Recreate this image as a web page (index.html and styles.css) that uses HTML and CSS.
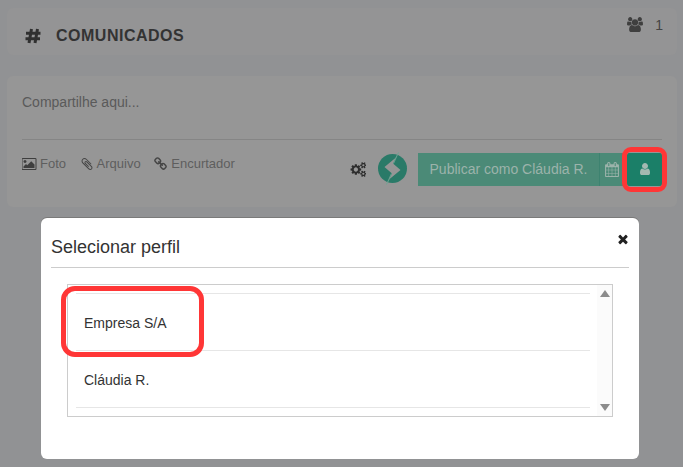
FILE: index.html
```html
<!DOCTYPE html>
<html lang="pt">
<head>
<meta charset="utf-8">
<title>Comunicados</title>
<link rel="stylesheet" href="styles.css">
</head>
<body>
<main class="page">
  <header class="card head">
    <div class="title">
      <svg class="ic-hash" viewBox="0 0 16 16"><path d="M6.500 1 4 15M12.500 1 10 15M1 5.300H15.500M.5 10.700H15" /></svg>
      <h1>COMUNICADOS</h1>
    </div>
    <div class="members">
      <svg class="ic-users" viewBox="0 0 1920 1792"><path d="M593 896q-162 5-265 128h-134q-82 0-138-40.500t-56-118.500q0-353 124-353 6 0 43.500 21t97.500 42.500 119 21.500q67 0 133-23-5 37-5 66 0 139 81 256zm1071 637q0 120-73 189.500t-194 69.500h-874q-121 0-194-69.500t-73-189.500q0-53 3.500-103.500t14-109 26.500-108.500 43-97.500 62-81 85.500-53.500 111.500-20q10 0 43 21.500t73 48 107 48 135 21.500 135-21.500 107-48 73-48 43-21.500q61 0 111.500 20t85.500 53.500 62 81 43 97.500 26.500 108.500 14 109 3.500 103.500zm-1024-1277q0 106-75 181t-181 75-181-75-75-181 75-181 181-75 181 75 75 181zm704 384q0 159-112.500 271.500t-271.500 112.500-271.500-112.500-112.500-271.500 112.500-271.500 271.500-112.500 271.500 112.500 112.500 271.500zm576 225q0 78-56 118.500t-138 40.500h-134q-103-123-265-128 81-117 81-256 0-29-5-66 66 23 133 23 59 0 119-21.500t97.500-42.500 43.500-21q124 0 124 353zm-128-609q0 106-75 181t-181 75-181-75-75-181 75-181 181-75 181 75 75 181z"/></svg>
      <span>1</span>
    </div>
  </header>

  <section class="card composer">
    <p class="placeholder">Compartilhe aqui...</p>
    <div class="bar">
      <div class="tools">
        <span class="tool"><svg class="ic-tool" viewBox="0 0 1920 1792"><path d="M576 576q0 80-56 136t-136 56-136-56-56-136 56-136 136-56 136 56 56 136zm1024 384v448h-1408v-192l320-320 160 160 512-512zm96-704h-1600q-13 0-22.500 9.500t-9.500 22.500v1216q0 13 9.500 22.500t22.500 9.500h1600q13 0 22.500-9.500t9.500-22.500v-1216q0-13-9.500-22.500t-22.500-9.500zm160 32v1216q0 66-47 113t-113 47h-1600q-66 0-113-47t-47-113v-1216q0-66 47-113t113-47h1600q66 0 113 47t47 113z"/></svg>Foto</span>
        <span class="tool"><svg class="ic-tool ic-narrow" viewBox="0 0 1792 1792"><path d="M1596 1385q0 117-79 196t-196 79q-135 0-235-100l-777-776q-113-115-113-271 0-159 110-270t269-111q158 0 273 113l605 606q10 10 10 22 0 16-30.500 46.500t-46.500 30.500q-13 0-23-10l-606-607q-79-77-181-77-106 0-179 75t-73 181q0 105 76 181l776 777q63 63 145 63 64 0 106-42t42-106q0-82-63-145l-581-581q-26-24-60-24-29 0-48 19t-19 48q0 32 25 59l410 410q10 10 10 22 0 16-31 47t-47 31q-12 0-22-10l-410-410q-63-61-63-149 0-82 57-139t139-57q88 0 149 63l581 581q100 98 100 235z"/></svg>Arquivo</span>
        <span class="tool"><svg class="ic-tool ic-narrow" viewBox="0 0 1792 1792"><path d="M1456 1216q0-40-28-68l-208-208q-28-28-68-28-42 0-72 32 3 3 19 18.500t21.500 21.500 15 19 13 25.500 3.500 27.500q0 40-28 68t-68 28q-15 0-27.500-3.500t-25.500-13-19-15-21.500-21.500-18.500-19q-33 31-33 73 0 40 28 68l206 207q27 27 68 27 40 0 68-26l147-146q28-28 28-67zm-703-705q0-40-28-68l-206-207q-28-28-68-28-39 0-68 27l-147 146q-28 28-28 67 0 40 28 68l208 208q27 27 68 27 42 0 72-31-3-3-19-18.500t-21.500-21.500-15-19-13-25.500-3.500-27.500q0-40 28-68t68-28q15 0 27.500 3.500t25.500 13 19 15 21.500 21.500 18.500 19q33-31 33-73zm895 705q0 120-85 203l-147 146q-83 83-203 83-121 0-204-85l-206-207q-83-83-83-203 0-123 88-209l-88-88q-86 88-208 88-120 0-204-84l-208-208q-84-84-84-204t85-203l147-146q83-83 203-83 121 0 204 85l206 207q83 83 83 203 0 123-88 209l88 88q86-88 208-88 120 0 204 84l208 208q84 84 84 204z"/></svg>Encurtador</span>
      </div>
      <div class="actions">
        <svg class="ic-cogs" viewBox="0 0 1920 1792"><path d="M960 896q0-106-75-181t-181-75-181 75-75 181 75 181 181 75 181-75 75-181zm768 512q0-52-38-90t-90-38-90 38-38 90q0 53 37.500 90.500t90.500 37.500 90.500-37.500 37.500-90.500zm0-1024q0-52-38-90t-90-38-90 38-38 90q0 53 37.500 90.500t90.500 37.500 90.500-37.500 37.500-90.500zm-384 421v185q0 10-7 19.500t-16 10.500l-155 24q-11 35-32 76 34 48 90 115 7 11 7 20 0 12-7 19-23 30-82.500 89.500t-78.500 59.500q-11 0-21-7l-115-90q-37 19-77 31-11 108-23 155-7 24-30 24h-186q-11 0-20-7.500t-10-17.500l-23-153q-34-10-75-31l-118 89q-7 7-20 7-11 0-21-8-144-133-144-160 0-9 7-19 10-14 41-53t47-61q-23-44-35-82l-152-24q-10-1-17-9.500t-7-19.500v-185q0-10 7-19.500t16-10.500l155-24q11-35 32-76-34-48-90-115-7-11-7-20 0-12 7-20 22-30 82-89t79-59q11 0 21 7l115 90q34-18 77-32 11-108 23-154 7-24 30-24h186q11 0 20 7.500t10 17.500l23 153q34 10 75 31l118-89q8-7 20-7 11 0 21 8 144 133 144 160 0 8-7 19-12 16-42 54t-45 60q23 48 34 82l152 23q10 2 17 10.500t7 19.500zm640 533v140q0 16-149 31-12 27-30 52 51 113 51 138 0 4-4 7-122 71-124 71-8 0-46-47t-52-68q-20 2-30 2t-30-2q-14 21-52 68t-46 47q-2 0-124-71-4-3-4-7 0-25 51-138-18-25-30-52-149-15-149-31v-140q0-16 149-31 13-29 30-52-51-113-51-138 0-4 4-7 4-2 35-20t59-34 30-16q8 0 46 46.500t52 67.500q20-2 30-2t30 2q51-71 92-112l6-2q4 0 124 70 4 3 4 7 0 25-51 138 17 23 30 52 149 15 149 31zm0-1024v140q0 16-149 31-12 27-30 52 51 113 51 138 0 4-4 7-122 71-124 71-8 0-46-47t-52-68q-20 2-30 2t-30-2q-14 21-52 68t-46 47q-2 0-124-71-4-3-4-7 0-25 51-138-18-25-30-52-149-15-149-31v-140q0-16 149-31 13-29 30-52-51-113-51-138 0-4 4-7 4-2 35-20t59-34 30-16q8 0 46 46.500t52 67.500q20-2 30-2t30 2q51-71 92-112l6-2q4 0 124 70 4 3 4 7 0 25-51 138 17 23 30 52 149 15 149 31z"/></svg>
        <svg class="logo" viewBox="0 0 30 34"><circle cx="14.500" cy="16.500" r="14.500" fill="#2a7a68"/><path d="M18 5.500 6.500 15 14 21.500 11 27.500 22.500 18 15 11.500Z" fill="#969696"/><path d="M20.500 .5 15.500 11.500 18 5.500ZM8.500 32.500 13.500 21.500 11 27.500Z" fill="#6fa494" stroke="#6fa494" stroke-width=".6"/></svg>
        <div class="btn-group">
          <button class="btn btn-main" type="button">Publicar como Cláudia R.</button>
          <button class="btn btn-cal" type="button"><svg class="ic-cal" viewBox="0 0 1664 1792"><path d="M128 1664h288v-288h-288v288zm352 0h320v-288h-320v288zm-352-352h288v-320h-288v320zm352 0h320v-320h-320v320zm-352-384h288v-288h-288v288zm736 736h320v-288h-320v288zm-384-736h320v-288h-320v288zm768 736h288v-288h-288v288zm-384-352h320v-320h-320v320zm-352-864v-288q0-13-9.500-22.500t-22.500-9.500h-64q-13 0-22.500 9.500t-9.500 22.500v288q0 13 9.500 22.500t22.500 9.500h64q13 0 22.500-9.500t9.500-22.500zm736 864h288v-320h-288v320zm-384-384h320v-288h-320v288zm384 0h288v-288h-288v288zm32-480v-288q0-13-9.500-22.500t-22.500-9.500h-64q-13 0-22.500 9.500t-9.500 22.500v288q0 13 9.500 22.500t22.500 9.500h64q13 0 22.500-9.500t9.500-22.500zm384-64v1280q0 52-38 90t-90 38h-1408q-52 0-90-38t-38-90v-1280q0-52 38-90t90-38h128v-96q0-66 47-113t113-47h64q66 0 113 47t47 113v96h384v-96q0-66 47-113t113-47h64q66 0 113 47t47 113v96h128q52 0 90 38t38 90z"/></svg></button>
          <button class="btn btn-user" type="button"><svg class="ic-user" viewBox="0 0 1792 1792"><path d="M1536 1399q0 109-62.500 187t-150.500 78h-854q-88 0-150.500-78t-62.500-187q0-85 8.500-160.500t31.500-152 58.500-131 94-89 134.500-34.500q131 128 313 128t313-128q76 0 134.500 34.500t94 89 58.500 131 31.500 152 8.500 160.500zm-256-887q0 159-112.500 271.500t-271.500 112.500-271.500-112.500-112.500-271.500 112.500-271.500 271.500-112.500 271.500 112.500 112.500 271.500z"/></svg></button>
        </div>
      </div>
    </div>
  </section>
</main>

<div class="mark mark-user"></div>

<div class="modal">
  <div class="modal-head">
    <h2>Selecionar perfil</h2>
    <svg class="ic-close" viewBox="0 0 1792 1792"><path d="M1490 1322q0 40-28 68l-136 136q-28 28-68 28t-68-28l-294-294-294 294q-28 28-68 28t-68-28l-136-136q-28-28-28-68t28-68l294-294-294-294q-28-28-28-68t28-68l136-136q28-28 68-28t68 28l294 294 294-294q28-28 68-28t68 28l136 136q28 28 28 68t-28 68l-294 294 294 294q28 28 28 68z"/></svg>
  </div>
  <div class="list">
    <ul class="rows">
      <li class="row">Empresa S/A</li>
      <li class="row">Cláudia R.</li>
    </ul>
    <div class="scrollbar">
      <span class="arrow arrow-up"></span>
      <span class="arrow arrow-down"></span>
    </div>
  </div>
</div>

<div class="mark mark-company"></div>
</body>
</html>
```

FILE: styles.css
```css
* { box-sizing: border-box; }
html, body { margin: 0; height: 100%; }
body {
  background: #919294;
  font-family: "Liberation Sans", Arial, sans-serif;
  color: #333;
  overflow: hidden;
  position: relative;
}
.page {
  padding: 8px 6px 0 7px;
  display: flex;
  flex-direction: column;
  gap: 21px;
}
.card { background: #969696; border-radius: 6px; }
.head {
  height: 47px;
  display: flex;
  justify-content: space-between;
  background: #949495;
}
.title { display: flex; align-items: center; gap: 15px; padding: 8px 0 0 18px; height: 47px; }
.ic-hash { width: 16px; height: 16px; fill: none; stroke: #303030; stroke-width: 3; display: block; }
h1 { margin: 0; font-size: 16px; font-weight: 700; color: #333; letter-spacing: 0.5px; }
.members { display: flex; align-items: flex-start; gap: 12px; padding: 9px 14px 0 0; font-size: 14px; color: #444; line-height: 16px; }
.ic-users { width: 16px; height: 15px; fill: #3f3f3f; display: block; }
.composer { height: 131px; padding: 0 15px; }
.placeholder { margin: 0; padding: 18px 0 0; height: 64px; font-size: 14px; line-height: 16px; color: #5a5a5a; border-bottom: 1px solid #858585; }
.bar { display: flex; justify-content: space-between; padding-top: 12px; }
.tools { display: flex; gap: 13.6px; font-size: 13px; color: #5e5e5e; padding-top: 4px; }
.tool { display: flex; align-items: flex-start; gap: 3px; line-height: 16px; }
.ic-tool { width: 15px; height: 14px; fill: #3e3e3e; display: block; margin-top: 1px; }
.ic-narrow { width: 14px; height: 14px; fill: #454545; }
.actions { display: flex; align-items: center; }
.ic-cogs { width: 16px; height: 15px; fill: #2e2e2e; margin-right: 12px; display: block; }
.logo { width: 30px; height: 34px; margin-right: 10px; display: block; overflow: visible; }
.btn-group { display: flex; height: 33px; }
.btn { border: 0; margin: 0; padding: 0; font: inherit; display: flex; align-items: center; justify-content: center; }
.btn-main { width: 181px; background: #4b8a77; color: #9cb3ab; font-size: 14px; }
.btn-cal { width: 28px; background: #4b8a77; border-left: 1px solid #3d8370; }
.ic-cal { width: 14px; height: 15px; fill: #9cb3ab; display: block; margin-left: -3px; }
.btn-user { width: 35px; background: #1b7f68; border-radius: 2px; }
.ic-user { width: 14px; height: 14px; fill: #a3b9b1; display: block; }
.mark {
  position: absolute;
  border: 5px solid #ff3636;
}
.mark-user { left: 622px; top: 147px; width: 45px; height: 45px; border-radius: 9px; }
.mark-company { left: 61px; top: 286px; width: 143px; height: 71px; border-radius: 14px; }
.modal {
  position: absolute;
  left: 41px;
  top: 218px;
  width: 598px;
  height: 241px;
  background: #fff;
  border-radius: 6px;
  padding: 0 10px;
  box-shadow: 0 -1px 0 #7a7a7a;
}
.modal-head {
  height: 50px;
  border-bottom: 1px solid #ccc;
  display: flex;
  justify-content: space-between;
  padding-top: 19px;
}
h2 { margin: 0; font-size: 18px; font-weight: 400; line-height: 20px; color: #333; }
.ic-close { width: 14px; height: 14px; fill: #222; margin: -5px -1px 0 0; display: block; }
.list {
  margin: 16px 16px 0;
  height: 133px;
  border: 1px solid #ccc;
  display: flex;
  justify-content: space-between;
  padding-left: 8px;
}
.rows { list-style: none; margin: 8px 0 0; padding: 0; width: 514px; border-top: 1px solid #e6e6e6; }
.row {
  height: 57px;
  border-bottom: 1px solid #e6e6e6;
  font-size: 14px;
  line-height: 16px;
  padding: 21px 0 0 8px;
  color: #333;
}
.scrollbar {
  width: 15px;
  background: #fbfbfb;
  display: flex;
  flex-direction: column;
  justify-content: space-between;
  align-items: center;
  padding: 5px 0;
}
.arrow { width: 0; height: 0; border-left: 5px solid transparent; border-right: 5px solid transparent; }
.arrow-up { border-bottom: 7px solid #8c8c8c; }
.arrow-down { border-top: 7px solid #8c8c8c; }
```
